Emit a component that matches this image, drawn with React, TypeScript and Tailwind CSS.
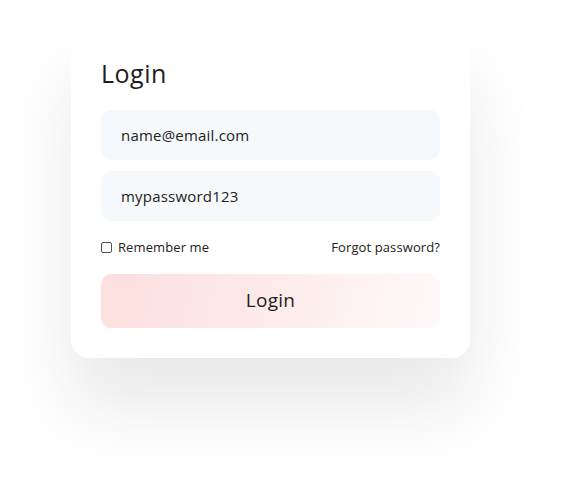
import { useState } from 'react';

export default function App() {
  const [remember, setRemember] = useState(false);

  return (
    <div className="min-h-screen w-full bg-white pl-[71px] pt-[28px]" style={{ fontFamily: '"Open Sans", "Noto Sans", sans-serif' }}>
      <div className="w-[399px] rounded-[18px] bg-white px-[30px] pb-[30px] pt-[28px] shadow-[0_50px_70px_rgba(0,0,0,0.09)]">
        <h1 className="text-[25px] leading-[34px] text-[#1d1d1f] tracking-[0.5px]">Login</h1>

        <div className="mt-[20px] flex flex-col gap-[11px]">
          <div className="flex h-[50px] items-center rounded-[10px] bg-[#f5f9fc] px-[20px] text-[15px] tracking-[0.2px] text-[#222]">
            name@email.com
          </div>
          <div className="flex h-[50px] items-center rounded-[10px] bg-[#f5f9fc] px-[20px] text-[15px] tracking-[0.2px] text-[#222]">
            mypassword123
          </div>
        </div>

        <div className="mt-[17px] flex items-center justify-between text-[13px] tracking-[0.1px] text-[#222]">
          <label className="flex items-center gap-[6px]">
            <input
              type="checkbox"
              checked={remember}
              onChange={() => setRemember(!remember)}
              className="h-[11px] w-[11px] appearance-none rounded-[2px] border border-[#555] bg-white"
            />
            Remember me
          </label>
          <span>Forgot password?</span>
        </div>

        <button className="mt-[16px] flex h-[54px] w-full items-center justify-center rounded-[10px] bg-[linear-gradient(105deg,#fddfdf_0%,#fde9e9_45%,#fffafa_100%)] text-[19px] tracking-[0.3px] text-[#222]">
          Login
        </button>
      </div>
    </div>
  );
}
